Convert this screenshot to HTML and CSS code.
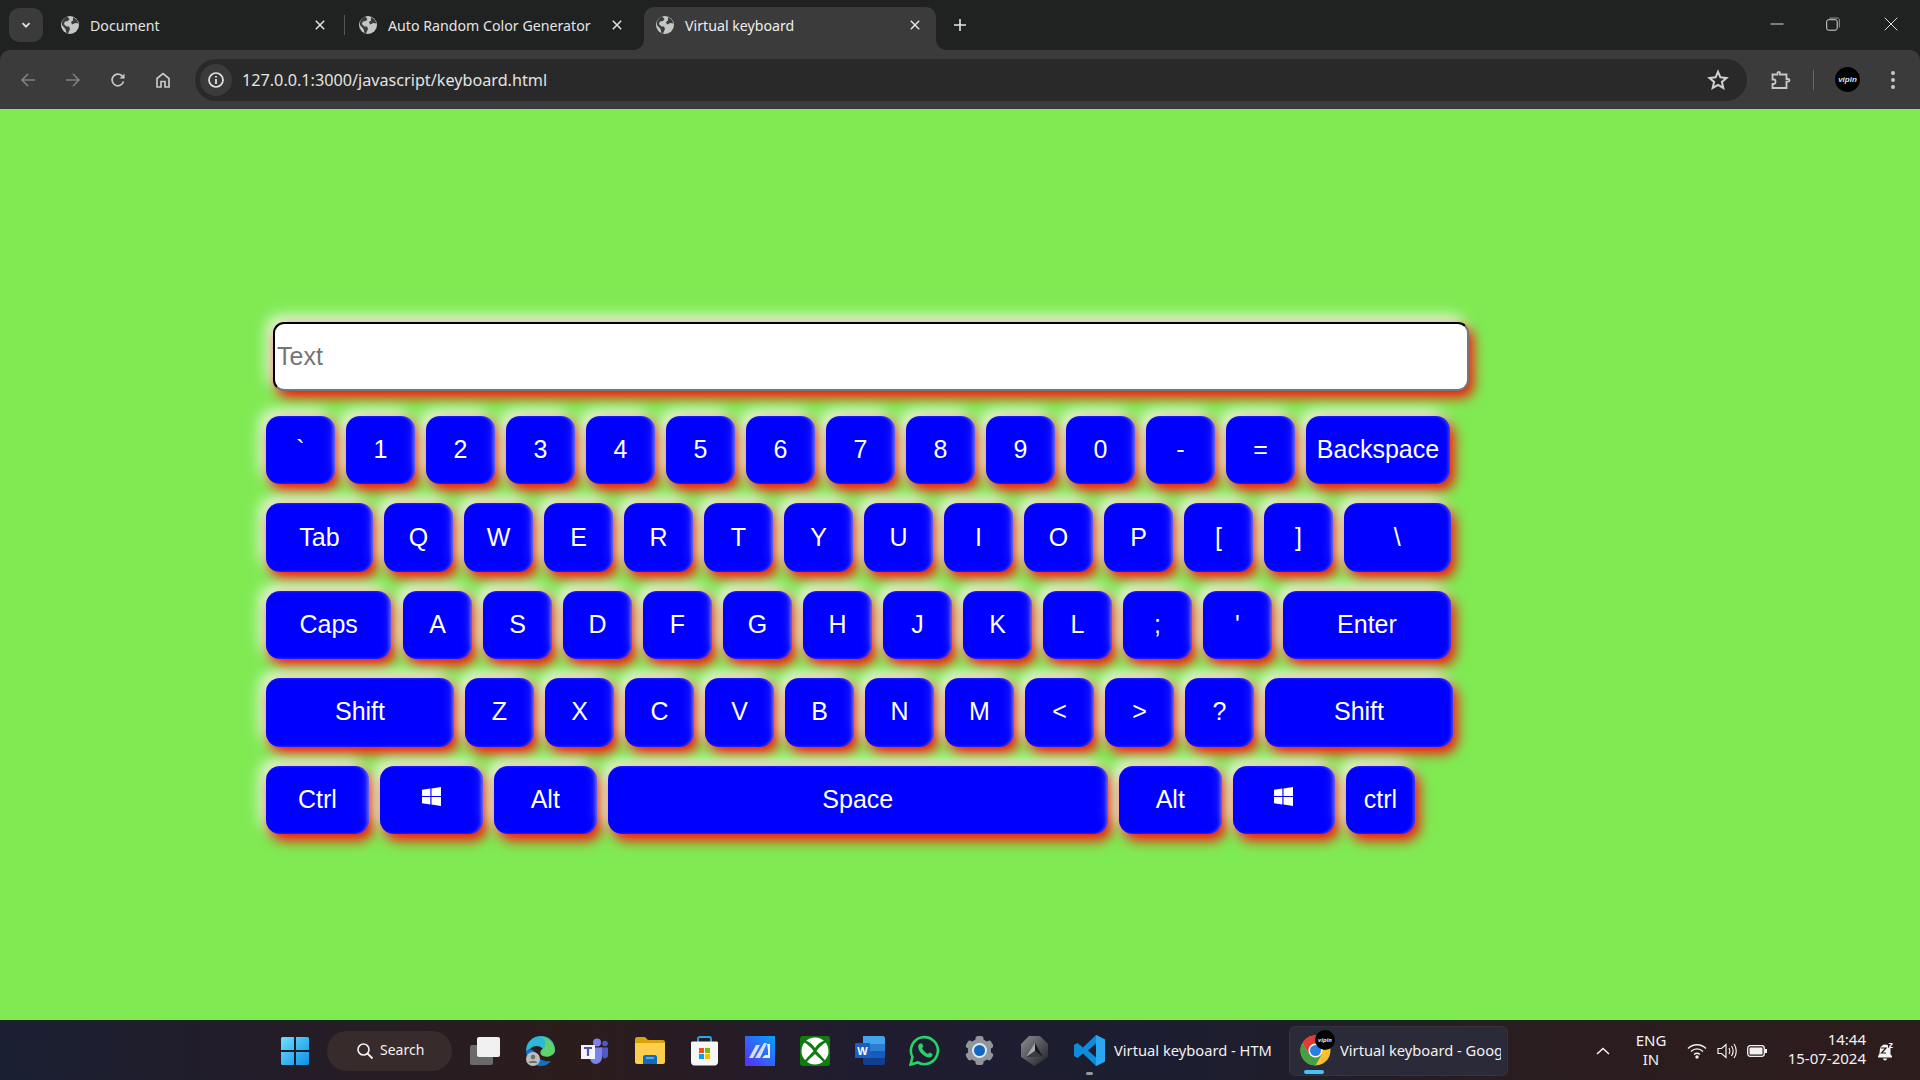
FILE: index.html
```html
<!DOCTYPE html>
<html lang="en">
<head>
  <meta charset="UTF-8">
  <title>Virtual keyboard</title>
  <link rel="stylesheet" href="styles.css">
</head>
<body>

  <svg class="defs" width="0" height="0">
    <symbol id="globe" viewBox="0 0 20 20">
      <circle cx="10" cy="10" r="9" fill="#c4c7c7"/>
      <path d="M7 1.600 9.500 4 8 6 5 6.500 3.800 9 6.500 11.500 9 11.500 10 14 8 18.600 6.500 18 5.500 14 2 10 1.800 7.500C2.800 4.700 4.500 2.700 7 1.600ZM13 2 16.500 4.500 18.600 8.500 15.500 8 12 9.500 11 7 13 5.500Z" fill="#3b3b3b"/>
    </symbol>
    <symbol id="winkey" viewBox="0 0 20 20">
      <path d="M0 3 8.800 1.700V9.500H0ZM10 1.500 20 0V9.500H10ZM0 10.500H8.800V18.300L0 17ZM10 10.500H20V20L10 18.500Z" fill="#fff"/>
    </symbol>
    <symbol id="close" viewBox="0 0 10 10">
      <path d="M0.800 0.800 9.200 9.200M9.200 0.800 0.800 9.200" stroke="#e3e3e3" stroke-width="1.500"/>
    </symbol>
  </svg>

  <header class="tabstrip">
    <div class="tab-search">
      <svg width="12" height="12" viewBox="0 0 12 12"><path d="M2.500 4.200 6 7.700 9.500 4.200" fill="none" stroke="#e3e3e3" stroke-width="1.800"/></svg>
    </div>
    <div class="tab tab-first">
      <svg class="favicon"><use href="#globe"/></svg>
      <span class="tab-title">Document</span>
      <svg class="tab-close"><use href="#close"/></svg>
    </div>
    <div class="tab-sep"></div>
    <div class="tab tab-second">
      <svg class="favicon"><use href="#globe"/></svg>
      <span class="tab-title">Auto Random Color Generator</span>
      <svg class="tab-close"><use href="#close"/></svg>
    </div>
    <div class="tab tab-active">
      <svg class="favicon"><use href="#globe"/></svg>
      <span class="tab-title">Virtual keyboard</span>
      <svg class="tab-close"><use href="#close"/></svg>
    </div>
    <svg class="new-tab" width="14" height="14" viewBox="0 0 14 14"><path d="M7 1V13M1 7H13" stroke="#e3e3e3" stroke-width="1.600"/></svg>

    <div class="win-controls">
      <svg width="14" height="14" viewBox="0 0 14 14"><path d="M0.500 7H13.500" stroke="#d8d8d8" stroke-width="1"/></svg>
      <svg width="14" height="14" viewBox="0 0 14 14"><rect x="0.700" y="2.700" width="10.500" height="10.500" rx="2" fill="none" stroke="#d8d8d8"/><path d="M3.500 1H11.500C12.500 1 13.300 1.800 13.300 2.800V10.500" fill="none" stroke="#9a9a9a"/></svg>
      <svg class="win-close" width="14" height="14" viewBox="0 0 14 14"><path d="M0.700 0.700 13.300 13.300M13.300 0.700 0.700 13.300" stroke="#d8d8d8" stroke-width="1"/></svg>
    </div>
  </header>

  <nav class="toolbar">
    <svg class="nav-icon nav-back" viewBox="0 0 18 18"><path d="M16 9H3M9 3 3 9 9 15" fill="none" stroke="#7d7f7f" stroke-width="1.700"/></svg>
    <svg class="nav-icon nav-fwd" viewBox="0 0 18 18"><path d="M2 9H15M9 3 15 9 9 15" fill="none" stroke="#7d7f7f" stroke-width="1.700"/></svg>
    <svg class="nav-icon nav-reload" viewBox="0 0 18 18"><path d="M14.500 10.500A5.800 5.800 0 1 1 13 4.800L15 7" fill="none" stroke="#c7c7c7" stroke-width="1.700"/><path d="M15.500 2.500V7.500H10.500Z" fill="#c7c7c7"/></svg>
    <svg class="nav-icon nav-home" viewBox="0 0 18 18"><path d="M3 16V7.500L9 2.500 15 7.500V16H11V10.500H7V16Z" fill="none" stroke="#c7c7c7" stroke-width="1.700"/></svg>
    <div class="omnibox">
      <div class="site-info">
        <svg width="18" height="18" viewBox="0 0 18 18"><circle cx="9" cy="9" r="7" fill="none" stroke="#e3e3e3" stroke-width="1.700"/><path d="M9 8V13M9 5V6.600" stroke="#e3e3e3" stroke-width="1.800"/></svg>
      </div>
      <span class="url">127.0.0.1:3000/javascript/keyboard.html</span>
      <svg class="star" width="22" height="22" viewBox="0 0 22 22"><path d="M11 2.800 13.400 8.300 19.500 8.900 14.900 12.900 16.300 18.900 11 15.800 5.700 18.900 7.100 12.900 2.500 8.900 8.600 8.300Z" fill="none" stroke="#d0d0d0" stroke-width="2"/></svg>
    </div>
    <svg class="puzzle" width="22" height="22" viewBox="0 0 22 22"><path d="M2.500 5.500H7.500V4C7.500 2.500 10 2.500 10 4V5.500H16.500V10H18C20 10 20 12.700 18 12.700H16.500V19H2.500V15H4C6 15 6 10.500 4 10.500H2.500Z" fill="none" stroke="#c7c7c7" stroke-width="1.800"/></svg>
    <div class="toolbar-sep"></div>
    <div class="avatar"><span>vipin</span></div>
    <svg class="menu" width="6" height="20" viewBox="0 0 6 20"><circle cx="3" cy="3" r="2" fill="#c7c7c7"/><circle cx="3" cy="10" r="2" fill="#c7c7c7"/><circle cx="3" cy="17" r="2" fill="#c7c7c7"/></svg>
  </nav>

  <main class="page">
    <input class="text-box" type="text" placeholder="Text">

    <div class="keyboard">
      <div class="row">
        <button class="key">`</button><button class="key">1</button><button class="key">2</button><button class="key">3</button><button class="key">4</button><button class="key">5</button><button class="key">6</button><button class="key">7</button><button class="key">8</button><button class="key">9</button><button class="key">0</button><button class="key">-</button><button class="key">=</button><button class="key key-back">Backspace</button>
      </div>
      <div class="row">
        <button class="key key-tab">Tab</button><button class="key">Q</button><button class="key">W</button><button class="key">E</button><button class="key">R</button><button class="key">T</button><button class="key">Y</button><button class="key">U</button><button class="key">I</button><button class="key">O</button><button class="key">P</button><button class="key">[</button><button class="key">]</button><button class="key key-bslash">\</button>
      </div>
      <div class="row">
        <button class="key key-caps">Caps</button><button class="key">A</button><button class="key">S</button><button class="key">D</button><button class="key">F</button><button class="key">G</button><button class="key">H</button><button class="key">J</button><button class="key">K</button><button class="key">L</button><button class="key">;</button><button class="key">'</button><button class="key key-enter">Enter</button>
      </div>
      <div class="row">
        <button class="key key-shift">Shift</button><button class="key">Z</button><button class="key">X</button><button class="key">C</button><button class="key">V</button><button class="key">B</button><button class="key">N</button><button class="key">M</button><button class="key">&lt;</button><button class="key">&gt;</button><button class="key">?</button><button class="key key-shift">Shift</button>
      </div>
      <div class="row">
        <button class="key key-ctrl">Ctrl</button>
        <button class="key key-ctrl"><svg class="win-glyph"><use href="#winkey"/></svg></button>
        <button class="key key-alt">Alt</button>
        <button class="key key-space">Space</button>
        <button class="key key-alt">Alt</button>
        <button class="key key-alt"><svg class="win-glyph"><use href="#winkey"/></svg></button>
        <button class="key">ctrl</button>
      </div>
    </div>
  </main>

  <footer class="taskbar">
    <div class="slot">
      <svg width="30" height="30" viewBox="0 0 30 30">
        <defs><linearGradient id="winblue" x1="0" y1="0" x2="1" y2="1"><stop offset="0" stop-color="#6fe0ff"/><stop offset="1" stop-color="#0c8fe6"/></linearGradient></defs>
        <path d="M1 2.500A1.500 1.500 0 0 1 2.500 1H14V14H1ZM16 1H27.500A1.500 1.500 0 0 1 29 2.500V14H16ZM1 16H14V29H2.500A1.500 1.500 0 0 1 1 27.500ZM16 16H29V27.500A1.500 1.500 0 0 1 27.500 29H16Z" fill="url(#winblue)"/>
      </svg>
    </div>
    <div class="search-pill">
      <svg width="18" height="18" viewBox="0 0 18 18"><circle cx="7.500" cy="7.500" r="5.500" fill="none" stroke="#f2f2f2" stroke-width="1.600"/><path d="M11.500 11.500 16.500 16.500" stroke="#f2f2f2" stroke-width="1.800"/></svg>
      <span>Search</span>
    </div>

    <div class="slot">
      <svg width="30" height="28" viewBox="0 0 30 28"><rect x="0" y="8" width="23" height="20" rx="2" fill="#6a6a6a"/><rect x="7" y="0" width="23" height="20" rx="2" fill="#f0f0f0"/></svg>
    </div>
    <div class="slot">
      <svg width="30" height="30" viewBox="0 0 30 30">
        <path d="M1 15C1 6 8 0 16 0 24 0 30 6 30 14 30 19 25 20 20 19 16 18 15 15 18 13 15 9 8 9 5 13 3 14 2 15 1 15Z" fill="#2eb8d8"/>
        <path d="M18 13C15 14 14 18 18 20 23 22 29 20 30 14 29 7 24 2 16 1 21 3 22 9 18 13Z" fill="#5fd36a"/>
        <path d="M1 15C1 23 8 30 16 30 20 30 24 28 26 25 20 26 14 24 12 19 9 13 4 12 1 15Z" fill="#1272c4"/>
        <circle cx="8" cy="23" r="7" fill="#bdbdbd"/><circle cx="8" cy="21" r="2.300" fill="#6f6f6f"/><path d="M3.500 27C4.500 24 11.500 24 12.500 27Z" fill="#6f6f6f"/>
      </svg>
    </div>
    <div class="slot">
      <svg width="28" height="26" viewBox="0 0 28 26">
        <circle cx="16" cy="4.500" r="4" fill="#7b83eb"/><circle cx="24" cy="5.500" r="2.800" fill="#5059c9"/>
        <path d="M19 9.500H27V17C27 20 24 21 22 20Z" fill="#5059c9"/>
        <path d="M9 9.500H21V19C21 23 18 26 15 26 11 26 9 23 9 19Z" fill="#7b83eb"/>
        <rect x="0" y="7" width="14" height="14" fill="#f4f4ff"/>
        <path d="M3 10H11M7 10V18" stroke="#4b53bc" stroke-width="2.200"/>
      </svg>
    </div>
    <div class="slot">
      <svg width="30" height="27" viewBox="0 0 30 27">
        <path d="M0 2C0 1 1 0 2 0H10L13 3H28C29 3 30 4 30 5V10H0Z" fill="#d9a20a"/>
        <path d="M0 6H30V25C30 26 29 27 28 27H2C1 27 0 26 0 25Z" fill="#fdcd4d"/>
        <path d="M8 20C8 19 9 18 10 18H20C21 18 22 19 22 20V27H8Z" fill="#0f6cbd"/>
        <path d="M11 21H19" stroke="#6fc3f0" stroke-width="1.500"/>
      </svg>
    </div>
    <div class="slot">
      <svg width="29" height="30" viewBox="0 0 29 30">
        <path d="M8 6V2.500C8 1 9 1 10 1H19C20 1 21 1 21 2.500V6" fill="none" stroke="#28a8ea" stroke-width="1.800"/>
        <path d="M1 7C1 6 1.500 5.500 2.500 5.500H26.500C27.500 5.500 28 6 28 7V26C28 28 26.500 29.500 25 29.500H4C2.500 29.500 1 28 1 26Z" fill="#f7f7f7"/>
        <rect x="9" y="12" width="5" height="5" fill="#f25022"/><rect x="15" y="12" width="5" height="5" fill="#7fba00"/>
        <rect x="9" y="18" width="5" height="5" fill="#00a4ef"/><rect x="15" y="18" width="5" height="5" fill="#ffb900"/>
      </svg>
    </div>
    <div class="slot">
      <svg width="30" height="30" viewBox="0 0 30 30">
        <defs><linearGradient id="mblue" x1="0" y1="1" x2="1" y2="0"><stop offset="0" stop-color="#5a2cf6"/><stop offset="1" stop-color="#06a2ff"/></linearGradient></defs>
        <rect width="30" height="30" fill="url(#mblue)"/>
        <path d="M4 22 11 9H15L8 22ZM10 22 19 7H22L15 22Z" fill="#d8defa"/>
        <path d="M22 8H25V22H17L20 19H23V14Z" fill="#eef1ff"/>
      </svg>
    </div>
    <div class="slot">
      <svg width="30" height="30" viewBox="0 0 30 30">
        <rect width="30" height="30" rx="3" fill="#107c10"/>
        <circle cx="15" cy="15" r="13.500" fill="#fff"/>
        <path d="M5 4.500C9 5.500 13 8.500 15 12 17 8.500 21 5.500 25 4.500L26.500 6C22.500 8 18.500 12 16.500 15 19.500 18.500 23.500 22 25.500 25L23.500 26.500C21 23 17 20 15 18 13 20 9 23 6.500 26.500L4.500 25C6.500 22 10.500 18.500 13.500 15 11.500 12 7.500 8 3.500 6Z" fill="#107c10"/>
      </svg>
    </div>
    <div class="slot">
      <svg width="30" height="29" viewBox="0 0 30 29">
        <path d="M8 0H28C29 0 30 1 30 2V8H8Z" fill="#41a5ee"/>
        <rect x="8" y="8" width="22" height="7" fill="#2b7cd3"/><rect x="8" y="15" width="22" height="7" fill="#185abd"/>
        <path d="M8 22H30V27C30 28 29 29 28 29H10C9 29 8 28 8 27Z" fill="#103f91"/>
        <rect x="0" y="7" width="15" height="15" rx="1" fill="#1a5fc0"/>
        <text class="word-w" x="7.500" y="19">W</text>
      </svg>
    </div>
    <div class="slot">
      <svg width="31" height="31" viewBox="0 0 31 31">
        <path d="M1.500 29.500 3.500 22A13.500 13.500 0 1 1 9 27.500Z" fill="none" stroke="#25d366" stroke-width="2.600"/>
        <path d="M11 8.500C9 9.500 8.500 12 10 15 12 19 16 22 20 22.500 22.500 22.500 24 20.500 23.500 19L20.500 17.500 19 19C16.500 18 14 15.500 13 13L14.500 11.500 13 8.500Z" fill="#25d366"/>
      </svg>
    </div>
    <div class="slot">
      <svg width="31" height="31" viewBox="0 0 31 31">
        <g fill="#8f969d">
          <circle cx="15.500" cy="15.500" r="11.500"/>
          <rect x="11.500" y="1" width="8" height="29" rx="2.500"/>
          <rect x="11.500" y="1" width="8" height="29" rx="2.500" transform="rotate(60 15.500 15.500)"/>
          <rect x="11.500" y="1" width="8" height="29" rx="2.500" transform="rotate(120 15.500 15.500)"/>
        </g>
        <circle cx="15.500" cy="15.500" r="7.500" fill="#e4e8ee"/>
        <circle cx="15.500" cy="15.500" r="5.500" fill="#1266c0"/>
      </svg>
    </div>
    <div class="slot">
      <svg width="27" height="30" viewBox="0 0 27 30">
        <defs><linearGradient id="hexgrey" x1="0" y1="0" x2="1" y2="1"><stop offset="0" stop-color="#8c8e92"/><stop offset="1" stop-color="#1f2024"/></linearGradient></defs>
        <path d="M8 0H19L27 8V21L13.500 30 0 21V8Z" fill="url(#hexgrey)"/>
        <path d="M14 7 5 21 14 15Z" fill="#a8aaae"/>
        <path d="M14 7 22 21 14 15Z" fill="#17181b"/>
        <path d="M5 21H22L14 15Z" fill="#3a3c40"/>
      </svg>
    </div>

    <div class="task-btn task-code">
      <svg class="task-icon" width="31" height="31" viewBox="0 0 31 31">
        <path d="M22 0 31 4.500V26.500L22 31 9 18.500 3.500 23 0 21V10L3.500 8 9 12.500ZM22 8.500 14 15.500 22 22.500Z" fill="#0e8bdc"/>
        <path d="M22 0 31 4.500V26.500L22 31Z" fill="#2aa7ee"/>
      </svg>
      <span class="task-label">Virtual keyboard - HTM</span>
      <i class="task-dot"></i>
    </div>
    <div class="task-btn task-chrome">
      <svg class="task-icon" width="31" height="31" viewBox="0 0 31 31">
        <circle cx="15.500" cy="15.500" r="15" fill="#fbc02d"/>
        <path d="M15.500 0.500A15 15 0 0 0 2.500 8L9 19 15.500 9H28.500A15 15 0 0 0 15.500 0.500Z" fill="#e53935"/>
        <path d="M2.500 8A15 15 0 0 0 15.500 30.500L22 19H9Z" fill="#43a047"/>
        <circle cx="15.500" cy="15.500" r="7" fill="#fff"/><circle cx="15.500" cy="15.500" r="5.500" fill="#2a7de1"/>
      </svg>
      <div class="avatar avatar-small"><span>vipin</span></div>
      <span class="task-label">Virtual keyboard - Google Chrome</span>
      <i class="task-active"></i>
    </div>

    <div class="tray">
      <svg class="tray-chevron" width="14" height="8" viewBox="0 0 14 8"><path d="M1 7 7 1.500 13 7" fill="none" stroke="#f2f2f2" stroke-width="1.600"/></svg>
      <div class="lang">ENG<br>IN</div>
      <svg width="20" height="16" viewBox="0 0 20 16"><path d="M1 5.500C6 0.500 14 0.500 19 5.500M4 8.500C7.500 5 12.500 5 16 8.500M7 11.500C9 9.800 11 9.800 13 11.500" fill="none" stroke="#f2f2f2" stroke-width="1.400"/><circle cx="10" cy="14" r="1.700" fill="#f2f2f2"/></svg>
      <svg width="20" height="16" viewBox="0 0 20 16"><path d="M1 5.500H4.500L9 1.500V14.500L4.500 10.500H1Z" fill="none" stroke="#f2f2f2" stroke-width="1.200"/><path d="M12 5C13 6.500 13 9.500 12 11M14.500 3C16.500 6 16.500 10 14.500 13M17 1C20 5 20 11 17 15" fill="none" stroke="#f2f2f2" stroke-width="1.200"/></svg>
      <svg width="20" height="12" viewBox="0 0 20 12"><rect x="0.700" y="0.700" width="16.600" height="10.600" rx="2.500" fill="none" stroke="#f2f2f2" stroke-width="1.300"/><rect x="2.500" y="2.500" width="13" height="7" rx="1" fill="#f2f2f2"/><rect x="18" y="4" width="2" height="4" fill="#f2f2f2"/></svg>
      <div class="clock">14:44<br>15-07-2024</div>
      <svg class="bell" width="18" height="20" viewBox="0 0 18 20"><path d="M1 15C3 13 2.500 11 3 8 3.500 5 6 3.500 8 3.500 9 3.500 10 3.700 11 4.200V7H13.500V13.500C14 14 14.500 14.500 15 15V16.500H1Z" fill="#f2f2f2"/><path d="M6 17.500H10C10 20 6 20 6 17.500Z" fill="#f2f2f2"/><text class="bell-z" x="11.500" y="7">z</text><path d="M4 7H9L4.500 12H9" fill="none" stroke="#241a1c" stroke-width="1.200"/></svg>
    </div>
  </footer>

</body>
</html>
```

FILE: styles.css
```css
* {
  box-sizing: border-box;
}

body {
  margin: 0;
  width: 1920px;
  height: 1080px;
  overflow: hidden;
  display: flex;
  flex-direction: column;
  font-family: "Liberation Sans", Arial, sans-serif;
  background-color: #202222;
}

.defs {
  position: absolute;
}

/* browser chrome */
.tabstrip {
  height: 50px;
  flex: none;
  display: flex;
  align-items: flex-end;
  background-color: #202222;
  padding-left: 9px;
  font-family: "Noto Sans", sans-serif;
  color: #e3e3e3;
}

.tab-search {
  width: 34px;
  height: 34px;
  margin-bottom: 8px;
  margin-right: 7px;
  border-radius: 10px;
  background-color: #3b3b3b;
  display: flex;
  align-items: center;
  justify-content: center;
}

.tab {
  height: 43px;
  display: flex;
  align-items: center;
  position: relative;
  padding-bottom: 7px;
  font-size: 14.200px;
}

.tab-first {
  width: 294px;
  padding-left: 10px;
}

.tab-second {
  width: 299px;
  padding-left: 13px;
}

.tab-active {
  width: 292px;
  padding-left: 11px;
  background-color: #3b3b3b;
  border-radius: 10px 10px 0 0;
  color: #ededed;
}

.tab-active::before,
.tab-active::after {
  content: "";
  position: absolute;
  bottom: 0;
  width: 10px;
  height: 10px;
}

.tab-active::before {
  left: -10px;
  background: radial-gradient(circle at 0 0, transparent 9.500px, #3b3b3b 10px);
}

.tab-active::after {
  right: -10px;
  background: radial-gradient(circle at 100% 0, transparent 9.500px, #3b3b3b 10px);
}

.tab-sep {
  width: 1px;
  height: 20px;
  margin-bottom: 15px;
  background-color: #555;
}

.favicon {
  width: 20px;
  height: 20px;
  flex: none;
  margin-right: 10px;
}

.tab-title {
  white-space: nowrap;
}

.tab-close {
  position: absolute;
  top: 13px;
  right: 16px;
  width: 10px;
  height: 10px;
}

.tab-first .tab-close {
  right: 19px;
}

.tab-second .tab-close {
  right: 22px;
}

.new-tab {
  margin: 0 0 18px 17px;
}

.win-controls {
  margin-left: auto;
  height: 50px;
  display: flex;
  align-items: center;
  gap: 42px;
  padding: 0 22px 2px 0;
}

.win-close {
  margin-left: 2px;
}

.toolbar {
  height: 59px;
  flex: none;
  display: flex;
  align-items: center;
  background-color: #3b3b3b;
  border-radius: 10px 10px 0 0;
}

.nav-icon {
  width: 18px;
  height: 18px;
  flex: none;
}

.nav-back {
  margin-left: 19px;
}

.nav-fwd {
  margin-left: 27px;
}

.nav-reload {
  margin-left: 27px;
}

.nav-home {
  margin-left: 27px;
}

.omnibox {
  width: 1552px;
  height: 42px;
  margin-left: 23px;
  display: flex;
  align-items: center;
  border-radius: 21px;
  background-color: #292929;
  padding-left: 5px;
  padding-right: 18px;
}

.site-info {
  width: 32px;
  height: 32px;
  border-radius: 50%;
  background-color: #3b3b3b;
  display: flex;
  align-items: center;
  justify-content: center;
}

.url {
  margin-left: 10px;
  font-family: "Noto Sans", sans-serif;
  font-size: 16.200px;
  color: #e3e3e3;
}

.star {
  margin-left: auto;
}

.puzzle {
  margin-left: 23px;
}

.toolbar-sep {
  width: 1px;
  height: 20px;
  margin-left: 21px;
  background-color: #666;
}

.avatar {
  width: 25px;
  height: 25px;
  margin-left: 21px;
  border-radius: 50%;
  background-color: #000;
  display: flex;
  align-items: center;
  justify-content: center;
  overflow: hidden;
}

.avatar span {
  font-size: 8px;
  font-weight: 700;
  font-style: italic;
  color: #cfe4ff;
}

.menu {
  margin-left: 30px;
}

/* page */
.page {
  flex: 1;
  padding: 213px 0 0 266px;
  background-color: #80ea53;
}

.text-box {
  display: block;
  width: 1196px;
  height: 69px;
  margin-left: 7px;
  padding: 1px 2px;
  border: 2px inset #767676;
  border-top-color: #202020;
  border-left-color: #202020;
  border-radius: 11px;
  font-family: inherit;
  font-size: 25px;
  box-shadow: 4px 6px 13px red, -5px -5px 15px white;
}

.keyboard {
  margin-top: 25px;
  display: flex;
  flex-direction: column;
  gap: 19px;
}

.row {
  display: flex;
  gap: 11px;
}

.key {
  width: 69px;
  height: 68.400px;
  flex: none;
  padding: 0 0 1px;
  border: 0;
  border-radius: 14px;
  background-color: #0000ff;
  color: #fff;
  font-family: inherit;
  font-size: 25px;
  box-shadow: inset -2px 0 3px rgba(255, 255, 255, 0.25), 4px 6px 13px red, -5px -5px 15px white;
}

.key-back {
  width: 144px;
}

.key-tab {
  width: 107px;
}

.key-bslash {
  width: 106.500px;
}

.key-caps {
  width: 125.400px;
  margin-right: 0.600px;
}

.key-enter {
  width: 168px;
}

.key-shift {
  width: 188px;
}

.key-ctrl {
  width: 103px;
}

.key-alt {
  width: 102.500px;
}

.key-space {
  width: 500.500px;
}

.win-glyph {
  width: 19px;
  height: 19px;
  display: block;
  margin: -5px auto 0;
}

/* windows taskbar */
.taskbar {
  height: 60px;
  flex: none;
  display: flex;
  align-items: center;
  padding-left: 267px;
  border-top: 1px solid #1c2a20;
  background: linear-gradient(90deg, #1a2033 0%, #221d2a 12%, #2c1c1c 30%, #201c30 45%, #1c1e30 62%, #2a1d20 80%, #2d1c1c 100%);
}

.slot {
  width: 55px;
  height: 48px;
  flex: none;
  display: flex;
  align-items: center;
  justify-content: center;
}

.search-pill {
  width: 125px;
  height: 40px;
  margin: 0 5px 0 5px;
  padding-left: 29px;
  flex: none;
  display: flex;
  align-items: center;
  gap: 6px;
  border-radius: 20px;
  background-color: #372c2b;
  color: #f2f2f2;
  font-family: "Noto Sans", sans-serif;
  font-size: 14px;
}

.search-pill span {
  padding-bottom: 2px;
}

.word-w {
  font-size: 11px;
  font-weight: 700;
  fill: #fff;
  text-anchor: middle;
}

.task-btn {
  height: 50px;
  flex: none;
  display: flex;
  align-items: center;
  position: relative;
  color: #f2f2f2;
  font-family: "Noto Sans", sans-serif;
  font-size: 14.700px;
  overflow: hidden;
}

.task-code {
  width: 219px;
  padding-left: 12px;
}

.task-chrome {
  width: 219px;
  margin-left: 8px;
  padding-left: 10px;
  border-radius: 6px;
  background-color: #2a2a38;
  border: 1px solid #34343f;
}

.task-icon {
  flex: none;
  margin-right: 9px;
}

.task-label {
  white-space: nowrap;
  padding-bottom: 2px;
}

.task-chrome .task-label {
  width: 161px;
  overflow: hidden;
}

.task-dot {
  position: absolute;
  left: 24px;
  bottom: 1px;
  width: 7px;
  height: 3px;
  border-radius: 2px;
  background-color: #9a9a9a;
}

.task-active {
  position: absolute;
  left: 14px;
  bottom: 1px;
  width: 20px;
  height: 4px;
  border-radius: 2px;
  background-color: #47c0f5;
}

.avatar-small {
  position: absolute;
  left: 25px;
  top: 3px;
  width: 20px;
  height: 20px;
  margin: 0;
}

.avatar-small span {
  font-size: 6px;
}

.tray {
  margin-left: auto;
  display: flex;
  align-items: center;
  gap: 10px;
  color: #f2f2f2;
  font-family: "Noto Sans", sans-serif;
  font-size: 15px;
  padding-right: 25px;
}

.tray-chevron {
  margin-right: 14px;
}

.lang {
  width: 34px;
  margin-right: 9px;
  text-align: center;
  line-height: 19px;
  margin-bottom: 1px;
}

.clock {
  width: 82px;
  margin: 0 1px 4px 7px;
  text-align: right;
  line-height: 19px;
}

.bell-z {
  font-size: 9px;
  font-weight: 700;
  fill: #f2f2f2;
}
```
